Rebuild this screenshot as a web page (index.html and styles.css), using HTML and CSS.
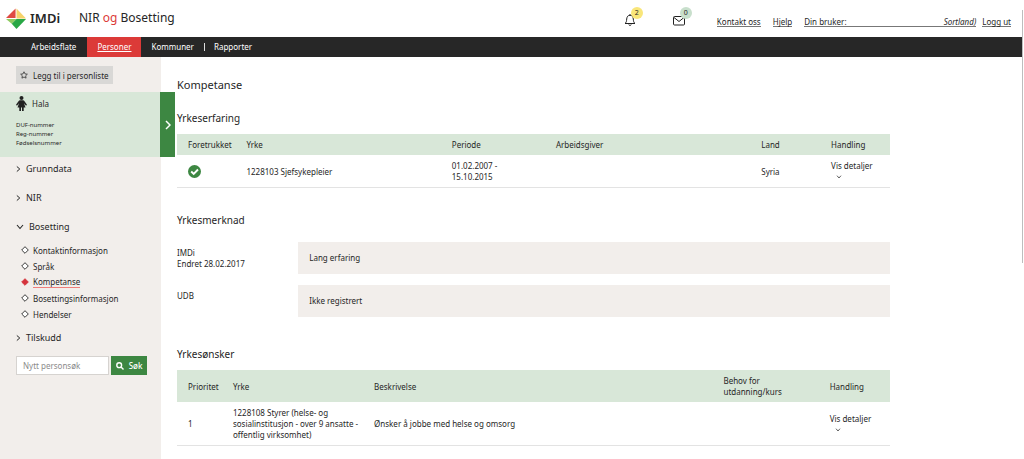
FILE: index.html
```html
<!DOCTYPE html>
<html lang="no">
<head>
<meta charset="utf-8">
<title>NIR og Bosetting</title>
<link rel="stylesheet" href="styles.css">
</head>
<body>
<svg class="defs" aria-hidden="true">
  <symbol id="right" viewBox="0 0 6 8"><path d="M1 1l3.500 3L1 7" fill="none" stroke="currentColor" stroke-width="1.200"/></symbol>
  <symbol id="down" viewBox="0 0 8 6"><path d="M1 1l3 3.500L7 1" fill="none" stroke="currentColor" stroke-width="1.100"/></symbol>
  <symbol id="diamond" viewBox="0 0 8 8"><path d="M4 .7L7.300 4 4 7.300.7 4z" stroke="currentColor" stroke-width=".9"/></symbol>
</svg>
<header class="header">
  <a class="brand" href="#">
    <svg class="logo" viewBox="0 0 22 22" aria-hidden="true">
      <path d="M10 0v10H0z" fill="#e04a43"/><path d="M11 0l10 10.500H11z" fill="#f6d36b"/>
      <path d="M0 11h11L6 16z" fill="#8fcb60"/><path d="M11 11h10L11 21.500 6 16z" fill="#28a745"/>
    </svg>
    <span class="brand-name">IMDi</span>
  </a>
  <span class="title">NIR <span class="red">og</span> Bosetting</span>
  <div class="alerts">
    <button class="alert" aria-label="Varsler">
      <svg width="12" height="14" viewBox="0 0 12 14" fill="none" stroke="#222"><path d="M1 10.500c1.500-1 1.500-2.500 1.700-4.500C3 3.500 4 2.300 6 2.300S9 3.500 9.300 6c.2 2 .2 3.500 1.700 4.500z"/><path d="M6 2.300V1M4.800 11.500c.3 1.300 2.100 1.300 2.400 0"/></svg>
      <span class="badge yellow">2</span>
    </button>
    <button class="alert" aria-label="Meldinger">
      <svg width="12" height="14" viewBox="0 0 12 14" fill="none" stroke="#222"><rect x=".5" y="3.500" width="11" height="8.500" rx="1"/><path d="M1 4.500l5 4 5-4"/></svg>
      <span class="badge green">0</span>
    </button>
  </div>
  <div class="links">
    <a href="#">Kontakt oss</a>
    <a href="#">Hjelp</a>
    <a class="user" href="#"><span>Din bruker:</span><em>Sortland)</em></a>
    <a class="logout" href="#">Logg ut</a>
  </div>
</header>
<nav class="nav">
  <a href="#">Arbeidsflate</a>
  <a class="active" href="#">Personer</a>
  <a href="#">Kommuner</a>
  <a class="divided" href="#">Rapporter</a>
</nav>
<div class="page">
  <aside class="sidebar">
    <button class="add"><svg width="8" height="8" viewBox="0 0 16 16" fill="none" stroke="#333" stroke-width="1.600"><path d="M8 1.500l2 4.300 4.700.6-3.400 3.200.8 4.700L8 12l-4.100 2.300.8-4.700L1.300 6.400 6 5.800z"/></svg>Legg til i personliste</button>
    <section class="person">
      <div class="person-info">
        <div class="person-name"><svg width="11" height="15" viewBox="0 0 11 15" fill="#222"><circle cx="5.500" cy="2" r="2"/><path d="M4 4.300h3c.7 0 1.100.4 1.500 1l2.300 3.200c.4.700-.6 1.400-1.200.7L8 7.300l1.500 4.200H7.700V15H6v-3.500H5V15H3.300v-3.500H1.500L3 7.300 1.400 9.200c-.6.700-1.600 0-1.200-.7l2.300-3.200c.4-.6.800-1 1.500-1z"/></svg>Hala</div>
        <div class="numbers">DUF-nummer<br>Reg-nummer<br>Fødselsnummer</div>
      </div>
      <button class="expand" aria-label="Vis person"><svg width="6" height="10" viewBox="0 0 6 10"><path d="M1 1l4 4-4 4" fill="none" stroke="#fff" stroke-width="1.500"/></svg></button>
    </section>
    <nav class="menu">
      <a class="group" href="#"><svg class="right"><use href="#right"/></svg>Grunndata</a>
      <a class="group" href="#"><svg class="right"><use href="#right"/></svg>NIR</a>
      <a class="group open" href="#"><svg class="down"><use href="#down"/></svg>Bosetting</a>
      <div class="sub">
        <a href="#"><svg><use href="#diamond"/></svg>Kontaktinformasjon</a>
        <a href="#"><svg><use href="#diamond"/></svg>Språk</a>
        <a class="current" href="#"><svg><use href="#diamond"/></svg><span>Kompetanse</span></a>
        <a href="#"><svg><use href="#diamond"/></svg>Bosettingsinformasjon</a>
        <a href="#"><svg><use href="#diamond"/></svg>Hendelser</a>
      </div>
      <a class="group last" href="#"><svg class="right"><use href="#right"/></svg>Tilskudd</a>
    </nav>
    <form class="search">
      <input type="text" placeholder="Nytt personsøk" aria-label="Nytt personsøk">
      <button type="button"><svg width="8" height="8" viewBox="0 0 8 8" fill="none" stroke="#fff" stroke-width="1.400"><circle cx="3.200" cy="3.200" r="2.400"/><path d="M5 5l2.500 2.500"/></svg>Søk</button>
    </form>
  </aside>
  <main class="main">
    <h1>Kompetanse</h1>
    <h2>Yrkeserfaring</h2>
    <table class="jobs">
      <thead><tr><th class="c-pref">Foretrukket</th><th class="c-job">Yrke</th><th class="c-period">Periode</th><th class="c-employer">Arbeidsgiver</th><th class="c-land">Land</th><th>Handling</th></tr></thead>
      <tbody><tr>
        <td><svg class="check" width="13" height="13" viewBox="0 0 13 13" role="img" aria-label="Ja"><circle cx="6.500" cy="6.500" r="6.500" fill="#3d8742"/><path d="M3.200 6.500l2.500 2.500 4.300-4.500" fill="none" stroke="#fff" stroke-width="1.900"/></svg></td>
        <td>1228103 Sjefsykepleier</td><td>01.02.2007 -<br>15.10.2015</td><td></td><td>Syria</td>
        <td><button class="details">Vis detaljer<svg><use href="#down"/></svg></button></td>
      </tr></tbody>
    </table>
    <h2 class="spaced">Yrkesmerknad</h2>
    <dl class="notes">
      <dt>IMDi<br>Endret 28.02.2017</dt><dd>Lang erfaring</dd>
      <dt>UDB</dt><dd>Ikke registrert</dd>
    </dl>
    <h2>Yrkesønsker</h2>
    <table class="wishes">
      <thead><tr><th class="c-prio">Prioritet</th><th class="c-wish">Yrke</th><th class="c-desc">Beskrivelse</th><th class="c-need">Behov for<br>utdanning/kurs</th><th>Handling</th></tr></thead>
      <tbody><tr>
        <td>1</td><td>1228108 Styrer (helse- og<br>sosialinstitusjon - over 9 ansatte -<br>offentlig virksomhet)</td><td>Ønsker å jobbe med helse og omsorg</td><td></td>
        <td><button class="details">Vis detaljer<svg><use href="#down"/></svg></button></td>
      </tr></tbody>
    </table>
  </main>
</div>
<div class="scroll" aria-hidden="true"></div>
</body>
</html>
```
FILE: styles.css
```css
* { box-sizing: border-box; }
body { margin: 0; min-height: 100vh; display: flex; flex-direction: column; background: #fff; color: #262626; font: 8px/11px "Noto Sans", "Open Sans", sans-serif; }
a { color: inherit; text-decoration: none; }
button, input { font: inherit; color: inherit; border: 0; border-radius: 0; margin: 0; padding: 0; background: none; }
svg { display: block; flex: none; }
.defs { position: absolute; width: 0; height: 0; }

.header { display: flex; align-items: center; height: 37px; padding: 0 13px 0 6px; }
.brand { display: flex; align-items: center; gap: 3px; width: 73px; }
.logo { width: 21px; height: 22px; }
.brand-name { font-size: 13px; line-height: 18px; font-weight: 600; padding-bottom: 2px; }
.title { font-size: 12px; line-height: 18px; padding-bottom: 1px; }
.red { color: #dc3a38; }
.alerts { display: flex; gap: 37px; margin: 3px 32px 0 auto; }
.alert { position: relative; width: 12px; height: 14px; }
.badge { position: absolute; left: 7px; top: -6px; width: 12px; height: 12px; border-radius: 6px; font-size: 7px; line-height: 12px; text-align: center; }
.yellow { background: #f9e67a; }
.green { background: #c8dfcc; }
.links { display: flex; gap: 12px; padding-top: 6px; }
.links a { border-bottom: 1px solid #777; line-height: 9px; }
.links .user { display: flex; justify-content: space-between; width: 172px; }
.links .logout { margin-left: -6px; }

.nav { display: flex; height: 20px; padding-left: 21px; background: #272727; color: #fff; line-height: 20px; margin-right: 2px; }
.nav a { padding: 0 10px; }
.nav .active { background: #dc3a38; text-decoration: underline; margin-left: 1px; }
.nav .divided { position: relative; }
.nav .divided::before { content: ""; position: absolute; left: 0; top: 6px; height: 8px; border-left: 1px solid #ddd; }

.page { display: flex; flex: 1; }
.sidebar { flex: none; width: 161px; background: #f2eeeb; padding-top: 9px; }
.add { display: flex; align-items: center; gap: 5px; height: 18px; margin-left: 16px; padding: 0 4px; background: #d9d8d6; }
.person { display: flex; justify-content: space-between; height: 65px; margin: 8px -14px 0 0; }
.person-info { flex: 1; padding: 3px 0 0 16px; background: #d8e7d8; }
.person-name { display: flex; align-items: center; gap: 5px; height: 16px; }
.numbers { margin-top: 10px; font-size: 6px; line-height: 9px; }
.expand { display: flex; align-items: center; justify-content: center; width: 15px; background: #3d8742; }
.menu { display: flex; flex-direction: column; padding: 4px 0 0 16px; }
.group { display: flex; align-items: center; gap: 5px; height: 15px; margin-bottom: 14px; font-size: 9px; }
.right { width: 5px; height: 8px; }
.down { width: 8px; height: 6px; }
.open { margin-bottom: 8px; }
.last { margin-bottom: 11px; }
.sub { display: flex; flex-direction: column; margin: 0 0 8px 5px; }
.sub a { display: flex; align-items: center; gap: 4px; height: 16px; }
.sub svg { width: 8px; height: 8px; fill: #fff; }
.sub .current svg { fill: #d5333c; color: #d5333c; }
.current span { border-bottom: 1px solid #ef7f7c; }
.search { display: flex; gap: 2px; height: 19px; margin: 0 14px 0 16px; }
.search input { flex: 1; min-width: 0; padding: 0 6px; border: 1px solid #d6d3d0; background: #fff; }
.search input::placeholder { color: #8b8b8b; }
.search button { display: flex; align-items: center; justify-content: center; gap: 5px; width: 36px; background: #3d8742; color: #fff; font-weight: 500; }

.main { flex: 1; padding: 20px 134px 12px 16px; }
h1, h2 { margin: 0; font-weight: 400; font-size: 10px; line-height: 16px; }
h1 { font-size: 11px; }
h2 { margin: 17px 0 8px; }
.spaced { margin-top: 24px; }
table { width: 100%; table-layout: fixed; border-collapse: collapse; }
th, td { padding: 5px 0 5px 11px; text-align: left; font-weight: 400; vertical-align: middle; }
th { background: #d8e7d8; }
tbody tr { border-bottom: 1px solid #e3e3e3; }
.c-pref { width: 8.2%; }
.c-job, .c-employer { width: 28.8%; }
.c-period { width: 14.6%; }
.c-land { width: 9.8%; }
.c-prio { width: 6.3%; }
.c-wish { width: 19.8%; }
.c-desc { width: 49%; }
.c-need { width: 14.9%; }
.details { display: block; text-align: left; }
.details svg { width: 6px; height: 4px; margin: 4px 0 3px 5px; }
.notes { display: grid; grid-template-columns: 17% 1fr; row-gap: 11px; margin: 14px 0 29px; }
.notes dt { padding-top: 5px; }
.notes dd { margin: 0; height: 32px; padding-left: 11px; line-height: 32px; background: #f2eeeb; }
.scroll { position: fixed; right: 0; top: 10px; width: 2px; height: 253px; border-left: 1px solid #bdbdbd; }
```
